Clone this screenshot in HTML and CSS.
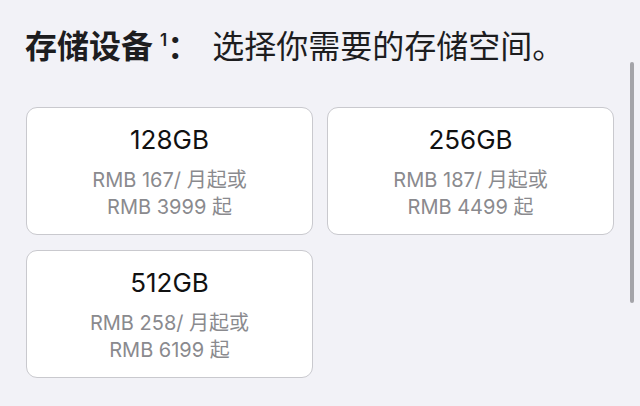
FILE: index.html
```html
<!DOCTYPE html>
<html lang="zh-CN">
<head>
<meta charset="utf-8">
<title>存储设备</title>
<link rel="stylesheet" href="styles.css">
</head>
<body>
<main class="page">
  <h2 class="heading"><span class="heading-strong">存储设备<sup class="note">1</sup>：</span><span class="heading-text">选择你需要的存储空间。</span></h2>
  <div class="options">
    <div class="option">
      <div class="option-size">128GB</div>
      <div class="option-price">RMB 167/ 月起或</div>
      <div class="option-price">RMB 3999 起</div>
    </div>
    <div class="option">
      <div class="option-size">256GB</div>
      <div class="option-price">RMB 187/ 月起或</div>
      <div class="option-price">RMB 4499 起</div>
    </div>
    <div class="option">
      <div class="option-size">512GB</div>
      <div class="option-price">RMB 258/ 月起或</div>
      <div class="option-price">RMB 6199 起</div>
    </div>
  </div>
  <div class="scroll-thumb"></div>
</main>
</body>
</html>
```
FILE: styles.css
```css
html, body {
  margin: 0;
  padding: 0;
  background: #f2f2f7;
}

.page {
  position: relative;
  width: 640px;
  height: 406px;
  overflow: hidden;
  font-family: Inter, "Noto Sans CJK SC", sans-serif;
  color: #1d1d1f;
}

.heading {
  margin: 0;
  padding: 29px 0 0 25px;
  font-size: 32px;
  line-height: 36px;
  font-weight: 400;
  white-space: nowrap;
}

.heading-strong {
  font-weight: 700;
}

.note {
  font-size: 17px;
  vertical-align: 12px;
  line-height: 0;
  margin-left: 7px;
  font-weight: 600;
}

.heading-text {
  margin-left: 13px;
}

.options {
  display: grid;
  grid-template-columns: 287px 287px;
  column-gap: 14px;
  row-gap: 15px;
  padding: 42px 0 0 26px;
}

.option {
  box-sizing: border-box;
  height: 128px;
  background: #ffffff;
  border: 1px solid #c9c9ce;
  border-radius: 11px;
  display: flex;
  flex-direction: column;
  align-items: center;
  padding-top: 16px;
}

.option-size {
  font-size: 26px;
  line-height: 32px;
  color: #111111;
  margin-bottom: 11px;
}

.option-price {
  font-size: 20px;
  line-height: 27px;
  color: #8a8a8e;
}

.scroll-thumb {
  position: absolute;
  top: 62px;
  right: 6px;
  width: 4px;
  height: 241px;
  border-radius: 2px;
  background: #a4a4a9;
}
```
